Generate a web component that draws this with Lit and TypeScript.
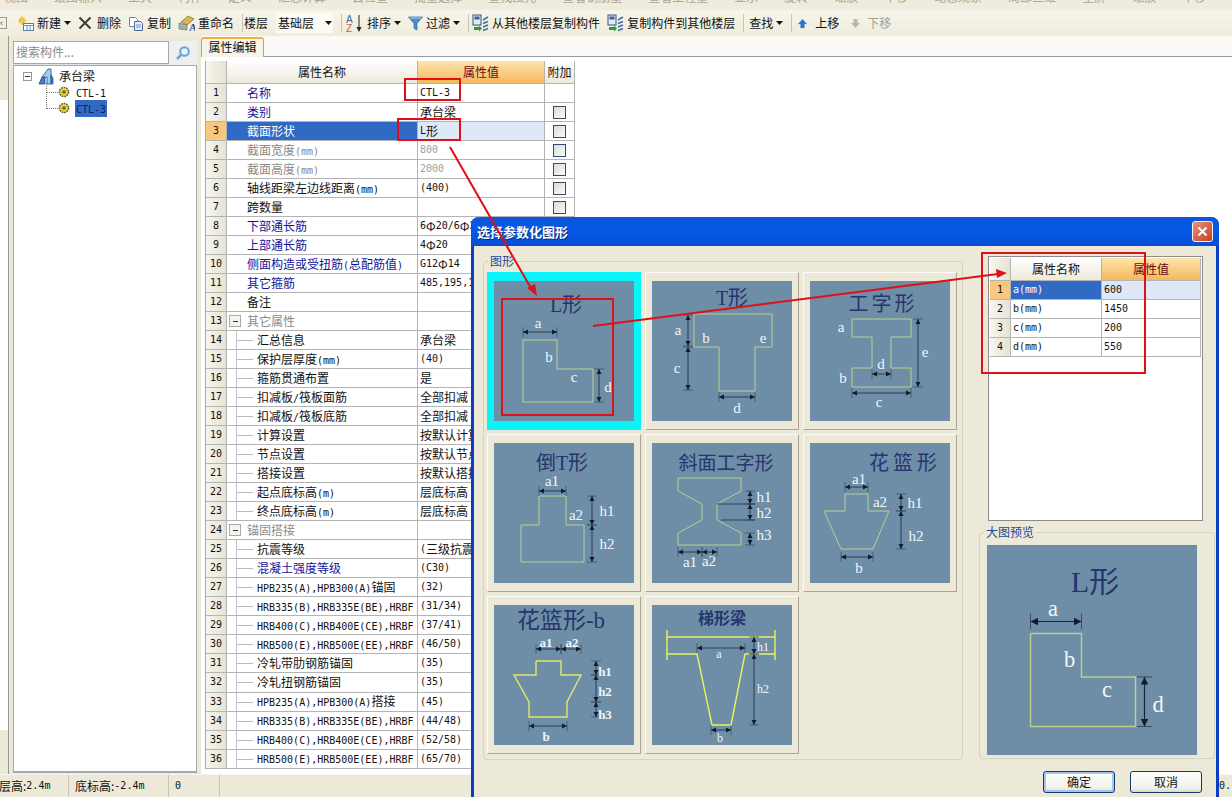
import { LitElement, html, css, svg } from "lit";
import { customElement } from "lit/decorators.js";

const t = (s: string) =>
  s.split(/([\x20-\x7e]+)/).filter(Boolean).map((p) =>
    /^[\x20-\x7e]/.test(p) ? html`<span class="lat">${p}</span>` : p
  );

type Row = { n: string; v?: string; k?: string; ind?: boolean; group?: boolean; cb?: boolean };
const r335 = "HRB335(B),HRB335E(BE),HRBF";
const r400 = "HRB400(C),HRB400E(CE),HRBF";
const r500 = "HRB500(E),HRB500E(EE),HRBF";
const rows: Row[] = [
  { n: "名称", v: "CTL-3", k: "blue" },
  { n: "类别", v: "承台梁", k: "blue", cb: true },
  { n: "截面形状", v: "L形", k: "sel", cb: true },
  { n: "截面宽度(mm)", v: "800", k: "gray", cb: true },
  { n: "截面高度(mm)", v: "2000", k: "gray", cb: true },
  { n: "轴线距梁左边线距离(mm)", v: "(400)", cb: true },
  { n: "跨数量", cb: true },
  { n: "下部通长筋", v: "6Φ20/6Φ20", k: "blue", cb: true },
  { n: "上部通长筋", v: "4Φ20", k: "blue", cb: true },
  { n: "侧面构造或受扭筋(总配筋值)", v: "G12Φ14", k: "blue", cb: true },
  { n: "其它箍筋", v: "485,195,100", k: "blue", cb: true },
  { n: "备注", cb: true },
  { n: "其它属性", group: true },
  { n: "汇总信息", v: "承台梁", ind: true },
  { n: "保护层厚度(mm)", v: "(40)", ind: true },
  { n: "箍筋贯通布置", v: "是", ind: true },
  { n: "扣减板/筏板面筋", v: "全部扣减", ind: true },
  { n: "扣减板/筏板底筋", v: "全部扣减", ind: true },
  { n: "计算设置", v: "按默认计算设置", ind: true },
  { n: "节点设置", v: "按默认节点设置", ind: true },
  { n: "搭接设置", v: "按默认搭接设置", ind: true },
  { n: "起点底标高(m)", v: "层底标高", ind: true },
  { n: "终点底标高(m)", v: "层底标高", ind: true },
  { n: "锚固搭接", group: true },
  { n: "抗震等级", v: "(三级抗震)", ind: true },
  { n: "混凝土强度等级", v: "(C30)", ind: true, k: "blue" },
  { n: "HPB235(A),HPB300(A)锚固", v: "(32)", ind: true },
  { n: r335, v: "(31/34)", ind: true },
  { n: r400, v: "(37/41)", ind: true },
  { n: r500, v: "(46/50)", ind: true },
  { n: "冷轧带肋钢筋锚固", v: "(35)", ind: true },
  { n: "冷轧扭钢筋锚固", v: "(35)", ind: true },
  { n: "HPB235(A),HPB300(A)搭接", v: "(45)", ind: true },
  { n: r335, v: "(44/48)", ind: true },
  { n: r400, v: "(52/58)", ind: true },
  { n: r500, v: "(65/70)", ind: true },
];

type Shape = {
  title: string; tx: number; ty: number; ts: number; ls?: number; tb?: boolean;
  polys: string[]; color?: string; sw?: number;
  dims: number[][]; lines?: number[][]; labels: [string, number, number][];
  lsize?: number; lbold?: boolean;
};

const lShape: Shape = {
  title: "L形", tx: 72, ty: 24, ts: 20,
  polys: ["29,59 63,59 63,88 99,88 99,121 29,121 29,59"],
  dims: [[29, 51, 63, 51], [105, 88, 105, 121]],
  labels: [["a", 44, 42], ["b", 55, 76], ["c", 80, 96], ["d", 114, 106]],
};
const shapes: Shape[] = [
  lShape,
  {
    title: "T形", tx: 80, ty: 17, ts: 20,
    polys: ["42,33 120,33 120,66 103,66 103,110 67,110 67,66 42,66 42,33"],
    dims: [[36, 34, 36, 65], [36, 66, 36, 109], [67, 116, 103, 116]],
    labels: [["a", 26, 49], ["b", 54, 57], ["e", 111, 57], ["c", 25, 87], ["d", 85, 127]],
  },
  {
    title: "工字形", tx: 73, ty: 23, ts: 20, ls: 3,
    polys: ["42,38 101,38 101,56 81,56 81,87 101,87 101,106 42,106 42,87 62,87 62,56 42,56 42,38"],
    dims: [[108, 38, 108, 106], [62, 93, 81, 93], [42, 112, 101, 112]],
    labels: [["a", 31, 46], ["b", 33, 97], ["d", 71, 83], ["e", 115, 71], ["c", 69, 121]],
  },
  {
    title: "倒T形", tx: 68, ty: 20, ts: 20,
    polys: ["45,53 72,53 72,82 90,82 90,119 27,119 27,82 45,82 45,53"],
    dims: [[45, 48, 72, 48], [98, 53, 98, 82], [98, 82, 98, 119]],
    labels: [["a1", 58, 38], ["a2", 82, 72], ["h1", 113, 68], ["h2", 113, 101]],
  },
  {
    title: "斜面工字形", tx: 74, ty: 20, ts: 19,
    polys: ["26,35 89,35 89,48 65,61 65,77 89,90 89,102 26,102 26,90 50,77 50,61 26,48 26,35"],
    dims: [[98, 48, 98, 61], [98, 61, 98, 77], [98, 90, 98, 102], [26, 109, 50, 109], [50, 109, 65, 109]],
    lines: [[65, 61, 103, 61], [69, 77, 103, 77]],
    labels: [["h1", 112, 54], ["h2", 112, 70], ["h3", 112, 92], ["a1", 38, 119], ["a2", 57, 118]],
  },
  {
    title: "花篮形", tx: 95, ty: 20, ts: 20, ls: 4,
    polys: ["35,51 58,51 58,68 79,68 63,106 31,106 14,68 35,68 35,51"],
    dims: [[35, 44, 58, 44], [91, 51, 91, 68], [91, 68, 91, 106], [31, 114, 63, 114]],
    labels: [["a1", 49, 36], ["a2", 70, 59], ["h1", 105, 60], ["h2", 106, 93], ["b", 49, 125]],
  },
  {
    title: "花篮形-b", tx: 67, ty: 15, ts: 23, color: "#dfe96a", sw: 1.4, lbold: true, lsize: 13,
    polys: ["42,56 67,56 67,70 87,70 73,97 73,112 35,112 35,97 20,70 42,70 42,56"],
    dims: [[42, 44, 67, 44], [67, 44, 87, 44], [102, 56, 102, 70], [102, 70, 102, 97], [102, 97, 102, 112], [35, 121, 73, 121]],
    labels: [["a1", 52, 37], ["a2", 78, 37], ["h1", 111, 66], ["h2", 111, 86], ["h3", 111, 109], ["b", 52, 131]],
  },
  {
    title: "梯形梁", tx: 70, ty: 13, ts: 16, tb: true, color: "#e8f25a", sw: 1.4, lsize: 12,
    polys: ["15,32 123,32", "15,49 45,49 60,120 79,120 93,49 123,49", "15,25 15,55", "123,25 123,55"],
    dims: [[45, 43, 93, 43], [102, 32, 102, 49], [102, 49, 102, 120], [59, 125, 79, 125]],
    labels: [["a", 67, 49], ["h1", 111, 42], ["h2", 111, 84], ["b", 68, 133]],
  },
];

const dim = (d: number[]) => {
  const [x1, y1, x2, y2] = d;
  const len = Math.hypot(x2 - x1, y2 - y1) || 1;
  const ux = (x2 - x1) / len, uy = (y2 - y1) / len;
  const px = -uy, py = ux;
  const head = (x: number, y: number, dx: number, dy: number) =>
    `${x},${y} ${x + dx * 5 + px * 2.5},${y + dy * 5 + py * 2.5} ${x + dx * 5 - px * 2.5},${y + dy * 5 - py * 2.5}`;
  return svg`
    <line x1=${x1} y1=${y1} x2=${x2} y2=${y2} stroke="#16263a" stroke-width=".8"/>
    <line x1=${x1 + px * 5} y1=${y1 + py * 5} x2=${x1 - px * 5} y2=${y1 - py * 5} stroke="#3a4c5e" stroke-width=".7"/>
    <line x1=${x2 + px * 5} y1=${y2 + py * 5} x2=${x2 - px * 5} y2=${y2 - py * 5} stroke="#3a4c5e" stroke-width=".7"/>
    <polygon points=${head(x1, y1, ux, uy)} fill="#101c2c"/>
    <polygon points=${head(x2, y2, -ux, -uy)} fill="#101c2c"/>`;
};

const drawing = (s: Shape, size: number) => html`
  <svg class="pic" width=${size} height=${size} viewBox="0 0 140 140">
    <rect width="140" height="140" fill="#6e8ea8"/>
    <text x=${s.tx} y=${s.ty} font-size=${s.ts} font-weight=${s.tb ? 700 : 400} letter-spacing=${s.ls ?? 0} text-anchor="middle" dominant-baseline="central"
      fill="#26356e" font-family="'Liberation Serif','Noto Sans CJK SC',serif">${s.title}</text>
    ${s.polys.map((p) => svg`<polyline points=${p} fill="none" stroke=${s.color ?? "#b9cf8c"} stroke-width=${s.sw ?? 1}/>`)}
    ${(s.lines ?? []).map((l) => svg`<line x1=${l[0]} y1=${l[1]} x2=${l[2]} y2=${l[3]} stroke="#16263a" stroke-width=".7"/>`)}
    ${s.dims.map(dim)}
    ${s.labels.map((l) => svg`<text x=${l[1]} y=${l[2]} font-size=${s.lsize ?? 15} font-weight=${s.lbold ? 700 : 400} text-anchor="middle" dominant-baseline="central"
      fill="#f0f6fa" font-family="'Liberation Serif',serif">${l[0]}</text>`)}
  </svg>`;

const caret = html`<svg class="caret" width="7" height="4" viewBox="0 0 7 4"><polygon points="0,0 7,0 3.5,4" fill="#111"/></svg>`;

const icons = {
  add: html`<svg width="17" height="16" viewBox="0 0 17 16"><path d="M5 1v3M5 7v3M1.500 5.500h3M6 5.500h3M2.500 3l2 2M7.500 8l-2-2M7.500 3l-2 2M2.500 8l2-2" stroke="#e8b820" stroke-width="1.300"/><rect x="6.500" y="8.500" width="10" height="7" fill="#fff" stroke="#5a7ca8"/><path d="M6.500 10.500h10M10 11v4M13 11v4" stroke="#6d8fb8"/></svg>`,
  del: html`<svg width="14" height="14" viewBox="0 0 14 14"><path d="M1.500 1.500 12.500 12.500M12.500 1.500 1.500 12.500" stroke="#3c3c3c" stroke-width="2"/></svg>`,
  copy: html`<svg width="16" height="15" viewBox="0 0 16 15"><path d="M1.500 1.500h6l2 2v7h-8z" fill="#fff" stroke="#6c88ac"/><path d="M6.500 5.500h6l2 2v7h-8z" fill="#e6eefa" stroke="#476c9c"/><path d="M8 9h5M8 11h5" stroke="#7a96bc"/></svg>`,
  rename: html`<svg width="17" height="18" viewBox="0 0 17 18"><path d="M3 8 10 2l6 3-7 6z" fill="#d8b64c" stroke="#7a6a30" stroke-width=".7"/><path d="M1 15V9l8 2v5z" fill="#9fb2a0" stroke="#667" stroke-width=".6"/><text x="11" y="17" font-size="11" font-weight="700" fill="#2c4f96" font-family="'Liberation Serif',serif">A</text></svg>`,
  sort: html`<svg width="19" height="19" viewBox="0 0 19 19"><text x="1" y="9" font-size="10" fill="#3a62a8" font-family="'Liberation Sans',sans-serif">A</text><text x="1" y="18" font-size="10" fill="#c06a2c" font-family="'Liberation Sans',sans-serif">Z</text><path d="M14 1v15" stroke="#222"/><path d="M11.500 13 14 18l2.500-5z" fill="#222"/></svg>`,
  filter: html`<svg width="15" height="15" viewBox="0 0 15 15"><path d="M.5 1h14L9 7.500V14L6 12.500v-5z" fill="#4c8ccc" stroke="#2f6aa6" stroke-width=".7"/><path d="M2 2h11" stroke="#a7d3f4"/></svg>`,
  xfer: html`<svg width="17" height="18" viewBox="0 0 17 18"><rect x="1" y="1" width="8" height="10" fill="#e4eaf4" stroke="#37507c"/><rect x="2.500" y="2.500" width="5" height="3" fill="#3a5ea8"/><path d="M11 6l5-3M11 9.500l5-2M11 13l5-2M11 16.500l5-2" stroke="#3f6ea8" stroke-width="1.500"/><path d="M2 13h5v-1.500l3 3-3 3v-1.500H2z" fill="#2e9a3c"/></svg>`,
  up: html`<svg width="11" height="11" viewBox="0 0 11 11"><path d="M5.500 1 10 6H7.500v4h-4V6H1z" fill="#2b72c8" stroke="#7cb2e8" stroke-width=".5"/></svg>`,
  down: html`<svg width="11" height="11" viewBox="0 0 11 11"><path d="M5.500 10 10 5H7.500V1h-4v4H1z" fill="#b8b8b0"/></svg>`,
  search: html`<svg width="16" height="16" viewBox="0 0 16 16"><circle cx="9.500" cy="6.500" r="4.300" fill="#e8f2fb" stroke="#6ea3cf" stroke-width="2"/><path d="M6 10 2 14" stroke="#6ea3cf" stroke-width="2.500"/></svg>`,
  beam: html`<svg width="16" height="17" viewBox="0 0 16 17"><path d="M1 16 4 9h3v7z" fill="#3f7fc4" stroke="#1e4f88" stroke-width=".8"/><path d="M4 9 10 1h3v15H9V9z" fill="#a4cbec" stroke="#1e4f88" stroke-width=".8"/><path d="M13 7l2 3v6h-2z" fill="#3f7fc4" stroke="#1e4f88" stroke-width=".7"/></svg>`,
  gear: html`<svg width="12" height="12" viewBox="0 0 12 12"><circle cx="6" cy="6" r="4.600" fill="#e2d04a" stroke="#5a5a1c" stroke-width="1.400" stroke-dasharray="1.600 1"/><circle cx="6" cy="6" r="1.800" fill="#6a6a20"/></svg>`,
};

@customElement("app-root")
export class AppRoot extends LitElement {
  static styles = css`
    :host { display: block; width: 1232px; height: 797px; position: relative; overflow: hidden;
      background: #ece9d8; color: #111; font: 12px/1 "Noto Sans CJK SC", "Liberation Sans", sans-serif; }
    .lat { font-family: "DejaVu Sans Mono", "Liberation Mono", monospace; font-size: 10px; }
    .shell { display: flex; flex-direction: column; height: 797px; }
    .strip { height: 10px; flex: none; overflow: hidden; display: flex; gap: 26px; padding-left: 4px; color: #a8a598; background: #efecdd; }
    .strip span.s { margin-top: -10px; line-height: 14px; white-space: nowrap; }
    .toolbar { height: 26px; flex: none; display: flex; align-items: center; gap: 7px;
      background: linear-gradient(#f7f5ea, #efecdc); white-space: nowrap; }
    .back { width: 7px; height: 12px; margin-right: 3px; box-sizing: border-box; border: 1px solid #9a9a8e; border-left: 0; font-size: 9px; line-height: 9px; color: #444; font-family: "Liberation Sans", sans-serif; display: flex; align-items: center; }
    .it { display: flex; align-items: center; gap: 3px; }
    .it.d { gap: 5px; }
    .sep { width: 1px; height: 18px; background: #c8c5b4; margin: 0 -4px 0 1px; }
    .sep.a { margin-right: -6px; }
    .combo { width: 57px; height: 20px; background: #fbfaf4; display: flex; align-items: center; justify-content: space-between; padding: 0 1px 0 2px; box-sizing: border-box; margin-left: 1px; }
    .find { margin-left: 2px; }
    .upi { margin-left: 2px; gap: 7px; }
    .dni { margin-left: 4px; gap: 6px; color: #a3a297; }
    .main { flex: 1; min-height: 0; display: flex; }
    .rail { width: 8px; flex: none; display: flex; flex-direction: column; border-right: 1px solid #9a9a8e; box-sizing: content-box; }
    .rail .w { flex: 1; background: #fff; margin: 64px 0 44px; }
    .left { width: 184px; margin-left: 4px; flex: none; display: flex; flex-direction: column; padding-top: 5px; }
    .searchrow { height: 24px; display: flex; background: #dfe3e4; flex: none; }
    .searchbox { width: 156px; box-sizing: border-box; height: 23px; border: 1px solid #9fa9ae; background: #fff; color: #8a8a8a; padding: 4px 2px; }
    .searchbtn { flex: 1; display: flex; align-items: center; justify-content: center; background: #eef0ee; }
    .tree { flex: 1; background: #fff; border: 1px solid #a3abae; border-bottom-width: 2px; padding: 2px 0 0 9px; position: relative; margin-bottom: 1px; }
    .node { height: 16px; display: flex; align-items: center; }
    .box { width: 9px; height: 9px; border: 1px solid #8a9aa6; box-sizing: border-box; background: #fff; display: flex; align-items: center; justify-content: center; flex: none; }
    .box::before { content: ""; width: 5px; height: 1px; background: #333; }
    .root .box { margin-right: 6px; }
    .root svg { margin-right: 5px; }
    .leaf { padding-left: 35px; gap: 5px; }
    .leaf .tx { padding: 2px 1px; }
    .leaf.on .tx { background: #316ac5; color: #0f1e5a; }
    .vline { position: absolute; left: 32px; top: 17px; height: 26px; border-left: 1px dotted #777; }
    .hline { position: absolute; left: 33px; width: 11px; border-top: 1px dotted #777; }
    .right { flex: 1; margin-left: 4px; min-width: 0; display: flex; flex-direction: column; background: #fbfaf6; }
    .tabs { height: 20px; flex: none; display: flex; }
    .tab { width: 63px; height: 20px; margin-top: 1px; position: relative; box-sizing: border-box; padding-bottom: 3px; background: #f7f5ea; border: 1px solid #a0a8ac; border-top: 2px solid #f0b040; border-bottom: 0; border-radius: 3px 3px 0 0; font-size: 12px; display: flex; align-items: center; justify-content: center; }
    .pane { flex: 1; min-height: 0; background: #fff; border-top: 1px solid #8f9ea6; padding: 4px 0 0 5px; }
    .grid { display: grid; grid-template-columns: 21px 191px 127px 30px; grid-template-rows: 23px repeat(36, 19.03px); width: 369px; border-left: 1px solid #a8a8a8; margin-left: -1px; }
    .grid > div, .pgrid > div { box-sizing: border-box; border-right: 1px solid #b4b4b4; border-bottom: 1px solid #b4b4b4; display: flex; align-items: center; white-space: nowrap; overflow: hidden; }
    .hd { background: linear-gradient(#fff, #ece9dc); justify-content: center; }
    .hdv { background: linear-gradient(#fde4ad, #f5b85c); justify-content: center; color: #6a0a14; }
    .num { background: linear-gradient(90deg, #f7f6ee, #e6e3d4); justify-content: center; }
    .num.on { background: #fbc77e; }
    .name { padding-left: 20px; }
    .name.ind { padding-left: 30px; position: relative; }
    .name.ind::before { content: ""; position: absolute; left: 9px; top: 0; bottom: -1px; border-left: 1px solid #c4c4c4; }
    .name.ind::after { content: ""; position: absolute; left: 9px; top: 9px; width: 17px; border-top: 1px solid #bbb; }
    .name.group { padding-left: 2px; gap: 6px; color: #8a8a8a; }
    .group .box { width: 12px; height: 12px; background: #f5f5f0; border-color: #aaa; }
    .blue { color: #14149a; }
    .gray { color: #8a8a8a; }
    .sel { background: #316ac5; color: #fff; }
    .val { padding-left: 2px; }
    .val.gray { color: #a0a0a0; }
    .val.selv { background: #dfe8f6; }
    .ck { justify-content: center; }
    .cb { width: 13px; height: 13px; box-sizing: border-box; border: 1px solid #2f4f68; background: linear-gradient(135deg, #d8dcd6, #fbfbf8); }
    .status { height: 22px; flex: none; display: flex; background: #ece9d8; border-top: 1px solid #f8f7ef; }
    .cell { display: flex; align-items: center; border-right: 1px solid #c8c5b4; padding-left: 3px; margin-right: 3px; overflow: hidden; white-space: nowrap; }
    .c1 { width: 69px; margin-left: -4px; }
    .c2 { width: 93px; }
    .c3 { width: 44px; }
    .c4 { flex: 1; border-right: 0; }
    .c5 { width: 13px; margin-right: 0; padding-left: 1px; border: 0; }
    .dialog { position: absolute; left: 471px; top: 217px; width: 748px; height: 600px; box-sizing: border-box; background: #ece9d8;
      border: 3px solid #0a3cc4; border-top: 0; border-radius: 8px 8px 0 0; }
    .title { height: 29px; margin: 0 -3px; padding: 0 6px; box-sizing: border-box; border-radius: 8px 8px 0 0; background: linear-gradient(#0a56dc, #0558e8 50%, #0a4ed0); color: #fff; font-weight: 700; font-size: 13px; display: flex; align-items: center; justify-content: space-between; text-shadow: 1px 1px 0 #0a2c80; }
    .close { width: 21px; height: 21px; box-sizing: border-box; background: linear-gradient(135deg, #e8907a, #c8401c); border: 1px solid #f2f2f2; border-radius: 3px; display: flex; align-items: center; justify-content: center; }
    .dbody { display: grid; grid-template-columns: 480px 236px; column-gap: 16px; padding: 8px 0 0 9px; }
    fieldset { margin: 0; min-width: 0; box-sizing: border-box; border: 1px solid #d6d2c0; border-radius: 4px; }
    legend { font-size: 12px; line-height: 14px; color: #1c4a98; padding: 0 2px; }
    .fg legend { margin-left: 1px; }
    .fp legend { margin-left: -3px; }
    .fg { height: 506px; padding: 4px 0 0 3px; }
    .cards { display: grid; grid-template-columns: repeat(3, 154px); grid-auto-rows: 158px; gap: 4px; }
    .card { box-sizing: border-box; display: flex; align-items: center; justify-content: center; background: #ece9d8; border: 1px solid; border-color: #fbfaf4 #aaa696 #aaa696 #fbfaf4; }
    .card.on { background: #08f4f8; border-color: #08f4f8; }
    .pic { display: block; flex: none; }
    .side { display: flex; flex-direction: column; }
    .pbox { margin: 2px 0 0 9px; width: 215px; height: 265px; box-sizing: border-box; background: #fff; border: 1px solid #8c8c8c; padding: 1px; }
    .pgrid { display: grid; grid-template-columns: 21px 91px 99px; grid-template-rows: 23px repeat(4, 19px); }
    .pn { padding-left: 2px; }
    .fp { margin-top: 4px; height: 234px; padding: 6px 0 0 7px; }
    .btns { display: flex; justify-content: flex-end; gap: 15px; padding: 12px 13px 0 0; }
    .btn { width: 72px; height: 22px; box-sizing: border-box; display: flex; align-items: center; justify-content: center; border: 1px solid #0f3c6e; border-radius: 3px; background: linear-gradient(#fff, #f2f1e8 80%, #dcd8c8); }
    .btn.def { box-shadow: inset 0 0 0 2px #a8c4ec; }
    .notes { position: absolute; left: 0; top: 0; pointer-events: none; }
  `;

  render() {
    return html`
      <div class="shell">
        <div class="strip">
          ${["视图", "绘图输入", "工具", "构件", "定义", "汇总计算", "云检查", "批量选择", "查找图元", "查看钢筋量", "查看工程量", "显示", "旋转", "缩放", "平移", "动态观察", "局部三维", "全屏", "缩放", "平移", "合法性"].map((s) => html`<span class="s">${s}</span>`)}
        </div>
        <div class="toolbar">
          <div class="back">‹</div>
          <div class="it">${icons.add}新建${caret}</div>
          <div class="it d">${icons.del}删除</div>
          <div class="it">${icons.copy}复制</div>
          <div class="it">${icons.rename}重命名</div>
          <div class="sep a"></div>
          <div class="it">楼层</div>
          <div class="combo"><span>基础层</span>${caret}</div>
          <div class="sep"></div>
          <div class="it">${icons.sort}排序${caret}</div>
          <div class="it">${icons.filter}过滤${caret}</div>
          <div class="sep"></div>
          <div class="it">${icons.xfer}从其他楼层复制构件</div>
          <div class="it">${icons.xfer}复制构件到其他楼层</div>
          <div class="sep"></div>
          <div class="it find">查找${caret}</div>
          <div class="sep"></div>
          <div class="it upi">${icons.up}上移</div>
          <div class="it dni">${icons.down}下移</div>
        </div>
        <div class="main">
          <div class="rail"><div class="w"></div></div>
          <div class="left">
            <div class="searchrow">
              <div class="searchbox">搜索构件...</div>
              <div class="searchbtn">${icons.search}</div>
            </div>
            <div class="tree">
              <div class="vline"></div>
              <div class="hline" style="top:26px"></div>
              <div class="hline" style="top:42px"></div>
              <div class="node root"><div class="box"></div>${icons.beam}承台梁</div>
              <div class="node leaf">${icons.gear}<span class="tx"><span class="lat">CTL-1</span></span></div>
              <div class="node leaf on">${icons.gear}<span class="tx"><span class="lat">CTL-3</span></span></div>
            </div>
          </div>
          <div class="right">
            <div class="tabs"><div class="tab">属性编辑</div></div>
            <div class="pane">
              <div class="grid">
                <div class="num"></div>
                <div class="hd">属性名称</div>
                <div class="hdv">属性值</div>
                <div class="hd">附加</div>
                ${rows.map((r, i) => {
                  const sel = r.k === "sel";
                  const nameCls = `name ${r.ind ? "ind" : ""} ${r.group ? "group" : ""} ${sel ? "sel" : r.k === "blue" ? "blue" : r.k === "gray" ? "gray" : ""}`;
                  return html`
                    <div class="num ${sel ? "on" : ""}"><span class="lat">${i + 1}</span></div>
                    <div class=${nameCls}>${r.group ? html`<span class="box"></span>` : ""}<span>${t(r.n)}</span></div>
                    <div class="val ${r.k === "gray" ? "gray" : ""} ${sel ? "selv" : ""}">${r.v ? t(r.v) : ""}</div>
                    <div class="ck">${r.cb ? html`<span class="cb"></span>` : ""}</div>`;
                })}
              </div>
            </div>
          </div>
        </div>
        <div class="status">
          <div class="cell c1">层高:<span class="lat">2.4m</span></div>
          <div class="cell c2">底标高:<span class="lat">-2.4m</span></div>
          <div class="cell c3"><span class="lat">0</span></div>
          <div class="cell c4"></div>
          <div class="cell c5"><span class="lat">0.</span></div>
        </div>
      </div>

      <div class="dialog">
        <div class="title">
          <span>选择参数化图形</span>
          <div class="close"><svg width="11" height="11" viewBox="0 0 11 11"><path d="M1.500 1.500l8 8M9.500 1.500l-8 8" stroke="#fff" stroke-width="2"/></svg></div>
        </div>
        <div class="dbody">
          <fieldset class="fg">
            <legend>图形</legend>
            <div class="cards">
              ${shapes.map((s, i) => html`<div class="card ${i === 0 ? "on" : ""}">${drawing(s, 140)}</div>`)}
            </div>
          </fieldset>
          <div class="side">
            <div class="pbox">
              <div class="pgrid">
                <div class="num"></div>
                <div class="hd">属性名称</div>
                <div class="hdv">属性值</div>
                ${[["a(mm)", "600"], ["b(mm)", "1450"], ["c(mm)", "200"], ["d(mm)", "550"]].map((p, i) => html`
                  <div class="num ${i === 0 ? "on" : ""}"><span class="lat">${i + 1}</span></div>
                  <div class="pn ${i === 0 ? "sel" : ""}"><span class="lat">${p[0]}</span></div>
                  <div class="val ${i === 0 ? "selv" : ""}"><span class="lat">${p[1]}</span></div>`)}
              </div>
            </div>
            <fieldset class="fp">
              <legend>大图预览</legend>
              ${drawing(lShape, 210)}
            </fieldset>
            <div class="btns">
              <div class="btn def">确定</div>
              <div class="btn">取消</div>
            </div>
          </div>
        </div>
      </div>

      <svg class="notes" width="1232" height="797" viewBox="0 0 1232 797" fill="none">
        <g stroke="#e01018" stroke-width="2">
          <rect x="405" y="79" width="55" height="21"/>
          <rect x="398" y="119" width="62" height="21"/>
          <rect x="502" y="299" width="111" height="116"/>
          <rect x="982" y="253" width="163" height="120"/>
          <path d="M450 147 532 290M593 326 998 274"/>
        </g>
        <polygon points="537,296 527,288 535,284" fill="#e01018"/>
        <polygon points="1007,273 996,269 997,278" fill="#e01018"/>
      </svg>
    `;
  }
}
